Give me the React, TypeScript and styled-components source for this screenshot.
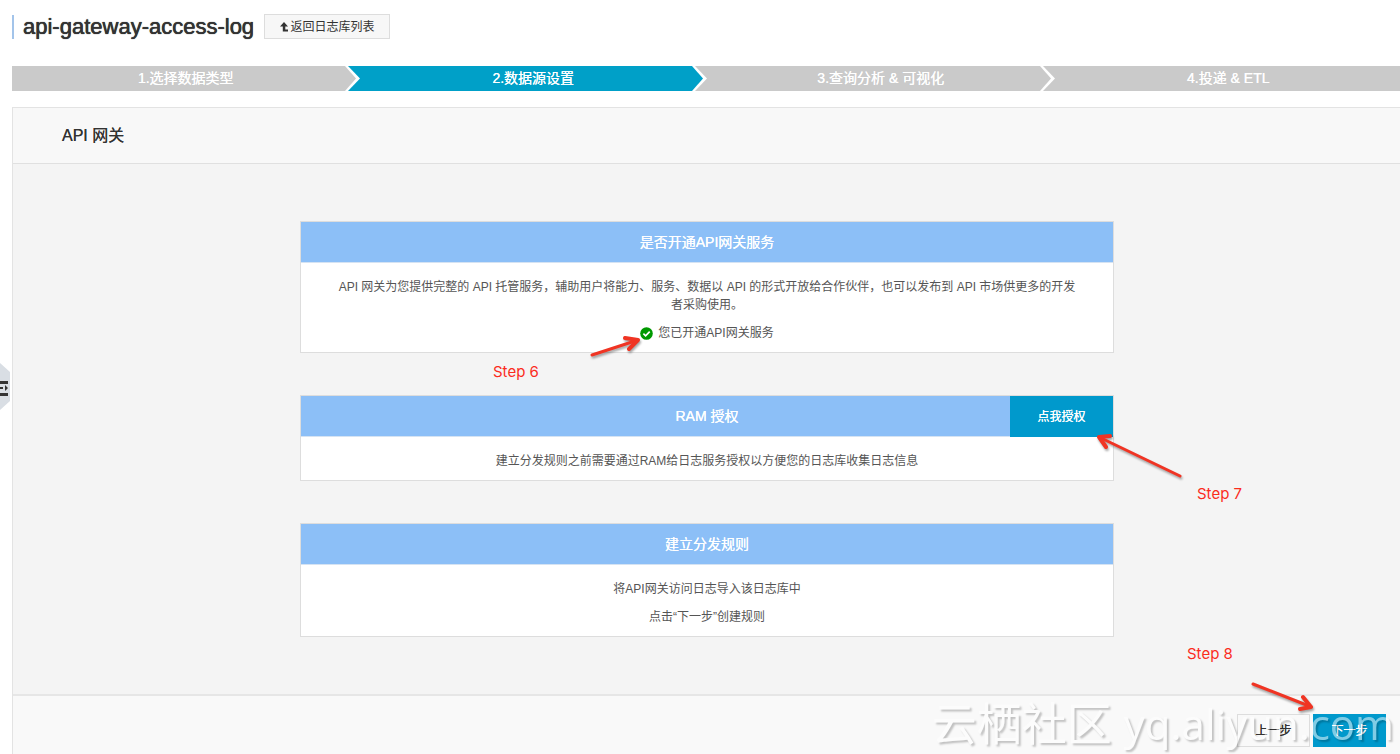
import React from "react";
import styled, { createGlobalStyle } from "styled-components";

const GlobalStyle = createGlobalStyle`
  * { box-sizing: border-box; }
  body {
    margin: 0;
    background: #fff;
    color: #333;
    font: 12px/18px "Liberation Sans", "Noto Sans CJK SC", sans-serif;
  }
  button { font: inherit; cursor: pointer; }
  h1, h2, h3, p, ol { margin: 0; padding: 0; font-weight: 400; }
`;

const Page = styled.div`
  position: relative;
  min-height: 100vh;
  padding-left: 12px;
  overflow: hidden;
  display: flex;
  flex-direction: column;
`;

const TitleBar = styled.header`
  display: flex;
  align-items: center;
  gap: 10px;
  padding: 14px 0 27px;
`;

const Title = styled.h1`
  border-left: 2px solid #a3c4ea;
  padding-left: 9px;
  font-size: 22px;
  line-height: 24px;
  text-shadow: 0 0 0 currentColor, 0 0 1px currentColor;
`;

const BackButton = styled.button`
  display: flex;
  align-items: center;
  justify-content: center;
  gap: 2px;
  width: 126px;
  height: 25px;
  padding: 0;
  border: 1px solid #ddd;
  background: #f7f7f7;
  color: #333;
`;

const Steps = styled.ol`
  display: flex;
  margin-right: -2px;
  list-style: none;
`;

const Step = styled.li<{ $fill: string }>`
  position: relative;
  flex: 1;
  height: 25px;
  background: ${(p) => p.$fill};
  color: #fff;
  font-size: 14px;
  line-height: 25px;
  text-align: center;
  text-shadow: 0 0 0 currentColor;
`;

const ChevronSvg = styled.svg`
  position: absolute;
  top: 0;
  right: 0;
`;

const Panel = styled.main`
  flex: 1;
  display: flex;
  flex-direction: column;
  margin: 16px -1px 0 0;
  border: 1px solid #e3e3e3;
  border-width: 1px 0 0 1px;
  background: #f4f4f4;
`;

const PanelHeader = styled.div`
  padding: 16px 49px 15px;
  border-bottom: 1px solid #e0e0e0;
  background: #f8f8f8;
`;

const PanelTitle = styled.h2`
  font-size: 16px;
  line-height: 24px;
  text-shadow: 0 0 0 currentColor;
`;

const PanelBody = styled.div`
  flex: 1;
  display: flex;
  flex-direction: column;
  align-items: center;
  gap: 42px;
  padding: 57px 24px;
`;

const Card = styled.section`
  position: relative;
  width: 100%;
  max-width: 814px;
  border: 1px solid #ddd;
  background: #fff;
`;

const CardHeader = styled.div`
  display: flex;
  align-items: center;
  justify-content: center;
  position: relative;
  height: 41px;
  border-bottom: 1px solid #d5e3f3;
  background: #8cbff7;
`;

const CardTitle = styled.h3`
  color: #fff;
  font-size: 14px;
  line-height: 20px;
  text-shadow: 0 0 0 currentColor;
`;

const AuthorizeButton = styled.button`
  position: absolute;
  top: 0;
  right: 0;
  width: 103px;
  height: 41px;
  padding: 0;
  border: 0;
  background: #0099cc;
  color: #fff;
  text-shadow: 0 0 0 currentColor;
`;

const CardBody = styled.div`
  display: flex;
  flex-direction: column;
  gap: 10px;
  padding: 15px 33px 10px;
  color: #555;
  text-align: center;
`;

const StatusLine = styled.p`
  display: flex;
  align-items: center;
  justify-content: center;
  gap: 5px;
`;

const Footer = styled.footer`
  display: flex;
  justify-content: flex-end;
  gap: 3px;
  padding: 18px 15px 7px;
  border-top: 2px solid #e6e6e6;
  background: #f9f9f9;
`;

const FooterButton = styled.button<{ $primary?: boolean }>`
  width: 73px;
  height: 33px;
  padding: 0;
  border: 1px solid ${(p) => (p.$primary ? "#0099cc" : "#ddd")};
  background: ${(p) => (p.$primary ? "#0099cc" : "#f9f9f9")};
  color: ${(p) => (p.$primary ? "#fff" : "#333")};
  text-shadow: 0 0 0 currentColor;
`;

const Note = styled.span<{ $left: number; $top: number }>`
  position: absolute;
  left: ${(p) => p.$left}px;
  top: ${(p) => p.$top}px;
  color: #fb2c1d;
  font: 15px/20px Inter, sans-serif;
  white-space: nowrap;
`;

const ArrowSvg = styled.svg<{ $left: number; $top: number }>`
  position: absolute;
  left: ${(p) => p.$left}px;
  top: ${(p) => p.$top}px;
  overflow: visible;
  pointer-events: none;
  filter: drop-shadow(1px 2px 1px rgba(0, 0, 0, 0.35));
`;

const FooterNotes = styled.div`
  position: absolute;
  right: 0;
  bottom: 0;
  width: 220px;
  height: 112px;
  pointer-events: none;
`;

const Watermark = styled.div`
  position: absolute;
  right: 6px;
  bottom: 2px;
  display: flex;
  align-items: center;
  gap: 12px;
  height: 56px;
  color: #fff;
  font: 45px/56px "Open Sans", "Noto Sans CJK SC", sans-serif;
  text-shadow: 2px 2px 2px rgba(0, 0, 0, 0.45);
  opacity: 0.5;
  pointer-events: none;
  white-space: nowrap;
`;

const WatermarkSite = styled.span`
  font-size: 42px;
`;

const SideHandle = styled.button`
  position: absolute;
  left: 0;
  top: 362px;
  width: 11px;
  height: 49px;
  padding: 0;
  border: 0;
  background: none;
`;

const GREY = "#cacaca";
const BLUE = "#00a0c8";

const steps = [
  { label: "1.选择数据类型", fill: GREY },
  { label: "2.数据源设置", fill: BLUE },
  { label: "3.查询分析 & 可视化", fill: GREY },
  { label: "4.投递 & ETL", fill: GREY },
];

function Chevron({ from, to }: { from: string; to: string }) {
  return (
    <ChevronSvg width="16" height="25" viewBox="0 0 16 25" aria-hidden="true">
      <rect width="16" height="25" fill={to} />
      <path d="M0 0H4L16 12.5L4 25H0Z" fill="#fff" />
      <path d="M0 0H1L12 12.5L1 25H0Z" fill={from} />
    </ChevronSvg>
  );
}

type ArrowProps = { left: number; top: number; width: number; height: number; shaft: string; head: string };

function Arrow({ left, top, width, height, shaft, head }: ArrowProps) {
  return (
    <ArrowSvg $left={left} $top={top} width={width} height={height} fill="none" stroke="#f03423" strokeLinecap="round" strokeLinejoin="round" aria-hidden="true">
      <path d={shaft} strokeWidth="3" />
      <path d={head} strokeWidth="4" />
    </ArrowSvg>
  );
}

export default function App() {
  return (
    <Page>
      <GlobalStyle />
      <TitleBar>
        <Title>api-gateway-access-log</Title>
        <BackButton type="button">
          <svg width="9" height="10" viewBox="0 0 9 10" aria-hidden="true">
            <path d="M4 0L8 4.4H5.3V7.4H8V9.4H2.8V4.4H0Z" fill="#333" />
          </svg>
          返回日志库列表
        </BackButton>
      </TitleBar>

      <Steps>
        {steps.map((step, i) => (
          <Step key={step.label} $fill={step.fill}>
            {step.label}
            {i < steps.length - 1 && <Chevron from={step.fill} to={steps[i + 1].fill} />}
          </Step>
        ))}
      </Steps>

      <Panel>
        <PanelHeader>
          <PanelTitle>API 网关</PanelTitle>
        </PanelHeader>
        <PanelBody>
          <Card>
            <CardHeader>
              <CardTitle>是否开通API网关服务</CardTitle>
            </CardHeader>
            <CardBody>
              <p>
                API 网关为您提供完整的 API 托管服务，辅助用户将能力、服务、数据以 API 的形式开放给合作伙伴，也可以发布到 API 市场供更多的开发者采购使用。
              </p>
              <StatusLine>
                <svg width="13" height="13" viewBox="0 0 13 13" aria-hidden="true">
                  <circle cx="6.5" cy="6.5" r="6.3" fill="#090" />
                  <path d="M3.4 6.7L5.6 8.8L9.7 4.7" fill="none" stroke="#fff" strokeWidth="1.7" />
                </svg>
                您已开通API网关服务
              </StatusLine>
            </CardBody>
            <Arrow left={289} top={115} width={50} height={20} shaft="M2 18L45 4" head="M35 1L48 3L39 12" />
            <Note $left={192} $top={140}>Step 6</Note>
          </Card>

          <Card>
            <CardHeader>
              <CardTitle>RAM 授权</CardTitle>
              <AuthorizeButton type="button">点我授权</AuthorizeButton>
            </CardHeader>
            <CardBody>
              <p>建立分发规则之前需要通过RAM给日志服务授权以方便您的日志库收集日志信息</p>
            </CardBody>
            <Arrow left={796} top={38} width={88} height={44} shaft="M4 4L83 42" head="M13 2L2 3L9 13" />
            <Note $left={896} $top={88}>Step 7</Note>
          </Card>

          <Card>
            <CardHeader>
              <CardTitle>建立分发规则</CardTitle>
            </CardHeader>
            <CardBody>
              <p>将API网关访问日志导入该日志库中</p>
              <p>点击“下一步”创建规则</p>
            </CardBody>
          </Card>
        </PanelBody>
        <Footer>
          <FooterButton type="button">上一步</FooterButton>
          <FooterButton type="button" $primary>下一步</FooterButton>
        </Footer>
      </Panel>

      <Watermark>
        云栖社区
        <WatermarkSite>yq.aliyun.com</WatermarkSite>
      </Watermark>
      <FooterNotes>
        <Note $left={7} $top={2}>Step 8</Note>
        <Arrow left={70} top={39} width={64} height={30} shaft="M3 3L59 25" head="M53 16L61 26L50 28" />
      </FooterNotes>

      <SideHandle type="button" aria-label="展开菜单">
        <svg width="11" height="49" viewBox="0 0 11 49" aria-hidden="true">
          <path d="M0 1L10 10V39L0 48Z" fill="#d9dee4" />
          <path d="M0 19H8V22H0ZM0 25H3V27H0ZM5 23L8 26L5 29ZM0 31H8V34H0Z" fill="#333" />
        </svg>
      </SideHandle>
    </Page>
  );
}
